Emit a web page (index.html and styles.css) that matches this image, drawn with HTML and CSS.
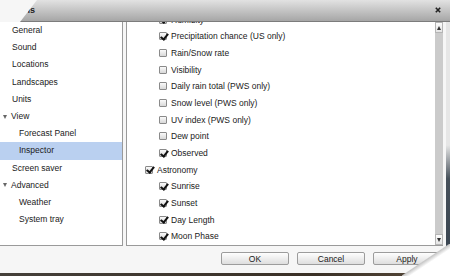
FILE: index.html
```html
<!DOCTYPE html>
<html lang="en">
  <head>
    <meta charset="UTF-8" />
    <title>Options</title>
    <link rel="stylesheet" href="styles.css">
  </head>
  <body>
    <div class="window">
      <div class="titlebar">
        <span class="title">Options</span>
        <svg class="close" width="6" height="6" viewBox="0 0 6 6">
          <path d="M0.8 0.8 L5.2 5.2 M5.2 0.8 L0.8 5.2" stroke="#222" stroke-width="1.6" />
        </svg>
      </div>
      <div class="main">
        <ul class="nav">
          <li>General</li>
          <li>Sound</li>
          <li>Locations</li>
          <li>Landscapes</li>
          <li>Units</li>
          <li class="group"><span class="arrow"></span>View</li>
          <li class="sub">Forecast Panel</li>
          <li class="sub selected">Inspector</li>
          <li>Screen saver</li>
          <li class="group"><span class="arrow"></span>Advanced</li>
          <li class="sub">Weather</li>
          <li class="sub">System tray</li>
        </ul>
        <div class="pane">
          <ul class="options">
            <li class="opt sub"><span class="box checked"></span>Humidity</li>
            <li class="opt sub"><span class="box checked"></span>Precipitation chance (US only)</li>
            <li class="opt sub"><span class="box"></span>Rain/Snow rate</li>
            <li class="opt sub"><span class="box"></span>Visibility</li>
            <li class="opt sub"><span class="box"></span>Daily rain total (PWS only)</li>
            <li class="opt sub"><span class="box"></span>Snow level (PWS only)</li>
            <li class="opt sub"><span class="box"></span>UV index (PWS only)</li>
            <li class="opt sub"><span class="box"></span>Dew point</li>
            <li class="opt sub"><span class="box checked"></span>Observed</li>
            <li class="opt"><span class="box checked"></span>Astronomy</li>
            <li class="opt sub"><span class="box checked"></span>Sunrise</li>
            <li class="opt sub"><span class="box checked"></span>Sunset</li>
            <li class="opt sub"><span class="box checked"></span>Day Length</li>
            <li class="opt sub"><span class="box checked"></span>Moon Phase</li>
          </ul>
          <div class="scrollbar">
            <span class="scroll-btn"><span class="tri-up"></span></span>
            <span class="track"></span>
            <span class="scroll-btn"><span class="tri-down"></span></span>
          </div>
        </div>
        <div class="edge"></div>
      </div>
      <div class="footer">
        <button>OK</button>
        <button>Cancel</button>
        <button>Apply</button>
      </div>
      <div class="desktop"></div>
      <div class="corner"></div>
    </div>
  </body>
</html>
```
FILE: styles.css
```css
* {
  box-sizing: border-box;
  margin: 0;
  padding: 0;
}
body {
  background: #fff;
  font-family: "Liberation Sans", Arial, sans-serif;
  font-size: 8.5px;
  color: #1a1a1a;
}
.window {
  position: relative;
  width: 450px;
  height: 276px;
  overflow: hidden;
  background: #f6f6f6;
}
.titlebar {
  height: 22px;
  display: flex;
  align-items: center;
  justify-content: space-between;
  padding: 0 9px 2px 1px;
  background: linear-gradient(#e2e2e2, #a6a6a6);
  border-bottom: 1px solid #7c7c7c;
  clip-path: polygon(37px 0, 100% 0, 100% 100%, 20px 100%);
}
.title {
  font-weight: bold;
  font-size: 9px;
  color: #222;
}
.main {
  display: flex;
  height: 224px;
  gap: 3px;
}
.nav {
  list-style: none;
  width: 123px;
  background: #fff;
  border-right: 1px solid #9a9a9a;
  border-bottom: 1px solid #9a9a9a;
}
.nav li {
  height: 17.2px;
  line-height: 17.2px;
  padding-left: 12px;
  display: flex;
  align-items: center;
}
.nav li.group {
  padding-left: 3px;
}
.nav li.sub {
  padding-left: 19px;
}
.nav li.selected {
  background: #bad0f0;
}
.arrow {
  width: 0;
  height: 0;
  border-left: 2.5px solid transparent;
  border-right: 2.5px solid transparent;
  border-top: 4px solid #666;
  margin-right: 4px;
}
.pane {
  flex: 1;
  display: flex;
  background: #fff;
  border-left: 1px solid #9a9a9a;
  border-bottom: 1px solid #9a9a9a;
  overflow: hidden;
}
.options {
  list-style: none;
  flex: 1;
  margin-top: -10.5px;
}
.opt {
  height: 16.67px;
  display: flex;
  align-items: center;
  padding-left: 18px;
}
.opt.sub {
  padding-left: 32px;
}
.box {
  width: 8px;
  height: 8px;
  margin-right: 4px;
  border: 1px solid #8a8a8a;
  border-radius: 1px;
  background: linear-gradient(#fafafa, #d8d8d8);
  position: relative;
}
.box.checked::after {
  content: "";
  position: absolute;
  left: 1.5px;
  top: -1.5px;
  width: 2.5px;
  height: 6px;
  border-right: 2px solid #111;
  border-bottom: 2px solid #111;
  transform: rotate(38deg);
}
.scrollbar {
  width: 9px;
  display: flex;
  flex-direction: column;
  background: #cbcbcb;
  border-left: 1px solid #fff;
}
.scroll-btn {
  height: 11px;
  display: flex;
  align-items: center;
  justify-content: center;
  background: linear-gradient(#fdfdfd, #e4e4e4);
  border: 1px solid #b5b5b5;
}
.track {
  flex: 1;
}
.tri-up,
.tri-down {
  width: 0;
  height: 0;
  border-left: 2.5px solid transparent;
  border-right: 2.5px solid transparent;
}
.tri-up {
  border-bottom: 4px solid #333;
}
.tri-down {
  border-top: 4px solid #333;
}
.edge {
  width: 4px;
  background: linear-gradient(#e6e6e6 0, #e6e6e6 55%, #46505a 70%, #3b4652 100%);
}
.footer {
  height: 27px;
  display: flex;
  justify-content: flex-end;
  align-items: flex-start;
  gap: 8px;
  padding: 6px 9px 0 0;
}
button {
  width: 68px;
  height: 13px;
  font-family: "Liberation Sans", Arial, sans-serif;
  font-size: 8.5px;
  color: #1a1a1a;
  background: linear-gradient(#fefefe, #dedede);
  border: 1px solid #9c9c9c;
  border-radius: 2px;
}
.desktop {
  height: 3px;
  background: linear-gradient(90deg, #45403a, #3a3026 70%, #5a4c3c);
}
.corner {
  position: absolute;
  right: 0;
  bottom: 0;
  width: 48px;
  height: 32px;
  background: linear-gradient(to bottom right, transparent 48%, #c8c8c8 50%, #fff 58%);
}
```
